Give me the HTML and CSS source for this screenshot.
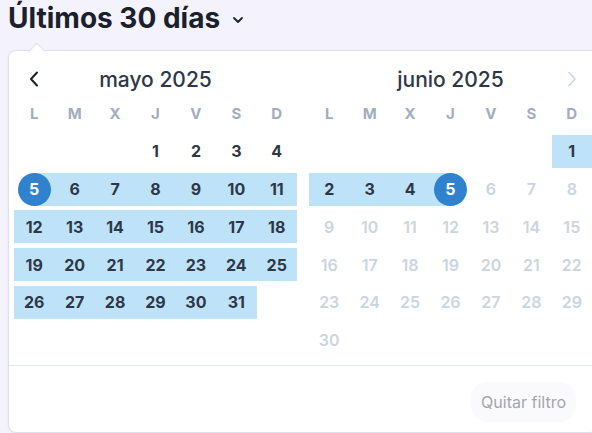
FILE: index.html
```html
<!DOCTYPE html>
<html lang="es">
<head>
  <meta charset="UTF-8">
  <title>Filtro de fechas</title>
  <link rel="stylesheet" href="styles.css">
</head>
<body>

  <div class="picker">
    <button class="trigger" type="button">
      <h1>Últimos 30 días</h1>
      <svg class="caret-down" width="12" height="12" viewBox="0 0 12 12"><path d="M2 4l4 4 4-4" fill="none" stroke="#1a202c" stroke-width="1.8" stroke-linecap="round" stroke-linejoin="round"/></svg>
    </button>

    <div class="popover">
      <div class="arrow"></div>
      <div class="months">
        <div class="month">
          <div class="month-head">
            <span class="nav">
              <svg width="10" height="16" viewBox="0 0 10 16"><path d="M8 1.5L2 8l6 6.5" fill="none" stroke="#1a202c" stroke-width="2" stroke-linecap="round" stroke-linejoin="round"/></svg>
            </span>
            <span class="month-title">mayo 2025</span>
            <span class="nav"></span>
          </div>
          <div class="grid" id="may"></div>
        </div>

        <div class="month">
          <div class="month-head">
            <span class="nav"></span>
            <span class="month-title">junio 2025</span>
            <span class="nav">
              <svg width="10" height="16" viewBox="0 0 10 16"><path d="M2 1.5L8 8l-6 6.5" fill="none" stroke="#cbd5e0" stroke-width="1.6" stroke-linecap="round" stroke-linejoin="round"/></svg>
            </span>
          </div>
          <div class="grid" id="june"></div>
        </div>
      </div>

      <div class="footer">
        <button class="clear" type="button" disabled>Quitar filtro</button>
      </div>
    </div>
  </div>

  <script>
    const weekdays = ['L', 'M', 'X', 'J', 'V', 'S', 'D'];

    function buildMonth(id, offset, days, stateOf) {
      const grid = document.getElementById(id);
      let html = weekdays.map(w => `<div class="weekday">${w}</div>`).join('');
      for (let i = 0; i < offset; i++) html += '<div class="day"></div>';
      for (let d = 1; d <= days; d++) {
        html += `<div class="day ${stateOf(d)}"><span>${d}</span></div>`;
      }
      grid.innerHTML = html;
    }

    // mayo: empieza en jueves, el rango arranca el 5
    buildMonth('may', 3, 31, d => d < 5 ? '' : d === 5 ? 'start' : 'range');
    // junio: empieza en domingo, el rango termina el 5
    buildMonth('june', 6, 30, d => d < 5 ? 'range' : d === 5 ? 'end' : 'disabled');
  </script>

</body>
</html>
```

FILE: styles.css
```css
body {
  margin: 0;
  padding: 0 8px;
  background-color: #f4f2fd;
  font-family: Inter, "Noto Sans", sans-serif;
  color: #2d3748;
  overflow: hidden;
}

.trigger {
  display: flex;
  align-items: center;
  gap: 12px;
  height: 36px;
  padding: 0;
  border: none;
  background: none;
  font-family: inherit;
  cursor: pointer;
}

.trigger h1 {
  margin: 0;
  font-size: 28px;
  line-height: 36px;
  font-weight: 700;
  color: #1a202c;
}

.caret-down {
  margin-top: 4px;
}

.popover {
  position: relative;
  width: 588px;
  margin-top: 14px;
  background: white;
  border: 1px solid #dbe0ea;
  border-radius: 8px;
  box-shadow: 0 1px 3px rgba(0, 0, 0, 0.05);
}

.arrow {
  position: absolute;
  top: -6px;
  left: 22px;
  width: 11px;
  height: 11px;
  background: white;
  border-top: 1px solid #dbe0ea;
  border-left: 1px solid #dbe0ea;
  transform: rotate(45deg);
}

.months {
  display: flex;
  gap: 12px;
  padding: 11px 5px 8.5px;
}

.month {
  width: 283px;
}

.month-head {
  display: flex;
  align-items: center;
  justify-content: space-between;
  height: 34px;
  margin-bottom: 1px;
}

.nav {
  width: 40px;
  display: flex;
  justify-content: center;
  align-items: center;
}

.month-title {
  font-size: 21px;
  font-weight: 500;
  color: #2d3748;
}

.grid {
  display: grid;
  grid-template-columns: repeat(7, 1fr);
  row-gap: 4.75px;
}

.weekday {
  height: 33px;
  display: flex;
  align-items: center;
  justify-content: center;
  font-size: 15px;
  font-weight: 700;
  color: #a0aec0;
}

.day {
  height: 33px;
  display: flex;
  align-items: center;
  justify-content: center;
  font-size: 16px;
  font-weight: 700;
  color: #2d3748;
}

.day.range {
  background-color: #bee3f8;
}

.day.start {
  background: linear-gradient(to right, transparent 50%, #bee3f8 50%);
}

.day.end {
  background: linear-gradient(to left, transparent 50%, #bee3f8 50%);
}

.day.start span,
.day.end span {
  width: 33px;
  height: 33px;
  border-radius: 50%;
  background-color: #3182ce;
  color: white;
  display: flex;
  align-items: center;
  justify-content: center;
}

.day.disabled {
  color: #cbd5e0;
  font-weight: 600;
}

.footer {
  display: flex;
  justify-content: flex-end;
  border-top: 1px solid #e2e8f0;
  padding: 16px 21px 10px;
}

.clear {
  height: 40px;
  padding: 0 10px;
  border: none;
  border-radius: 16px;
  background-color: #fafafc;
  font-family: inherit;
  font-size: 16px;
  font-weight: 400;
  color: #a3a5ae;
}
```
